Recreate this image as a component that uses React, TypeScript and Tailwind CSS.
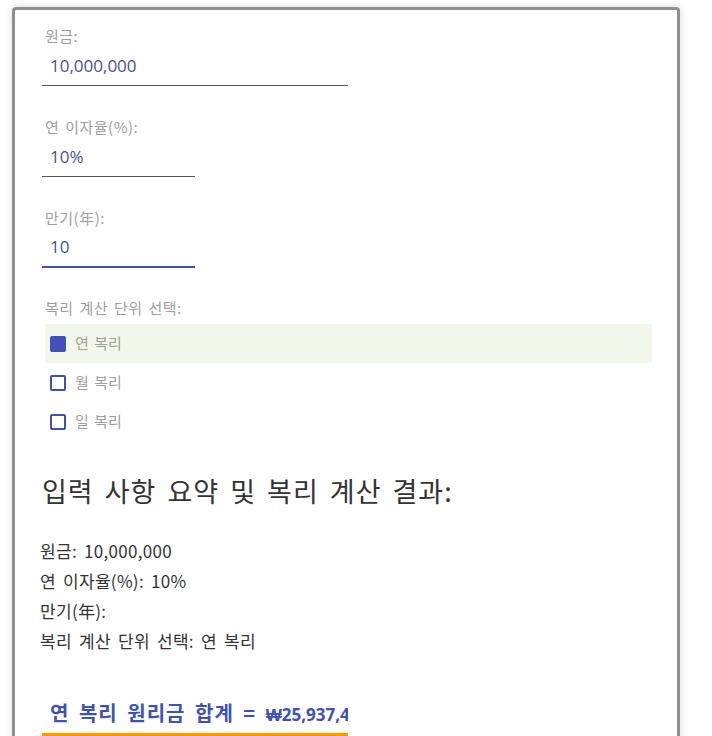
import React from 'react';

const font = { fontFamily: '"Noto Sans CJK KR", sans-serif' };

function Field({ label, value, width, focused }: { label: string; value: string; width: string; focused?: boolean }) {
  return (
    <div className="flex flex-col">
      <label className="pl-[3px] text-[15px] leading-[20px] tracking-[0.5px] [word-spacing:2px] text-[#9e9e9e]">
        {label}
      </label>
      <div
        className={`${width} h-[40px] flex items-center pl-[8px] text-[17px] text-[#4b4f94] ${
          focused ? 'border-b-2 border-[#3f51b5]' : 'border-b border-[#555555]'
        }`}
        style={{ fontFamily: '"Open Sans", sans-serif' }}
      >
        {value}
      </div>
    </div>
  );
}

function Option({ label, checked }: { label: string; checked?: boolean }) {
  return (
    <div className={`flex items-center h-[39px] pl-[5px] ${checked ? 'bg-[#f1f8e9]' : ''}`}>
      <span
        className={`w-[16px] h-[16px] rounded-[2px] border-2 border-[#3f51b5] ${checked ? 'bg-[#3f51b5]' : 'bg-white'}`}
      />
      <span className="ml-[9px] text-[15px] [word-spacing:2px] text-[#9e9e9e]">{label}</span>
    </div>
  );
}

export default function App() {
  return (
    <div className="bg-white min-h-[736px] h-[736px] overflow-hidden pl-[12px] pr-[32px] pt-[7px]" style={font}>
      <div className="border-[3px] border-[#8e8e8e] rounded-[4px] shadow-[0_0_8px_rgba(0,0,0,0.15)] pl-[27px] pr-[25px] pt-[16px] pb-10 h-[800px]">
        <div className="flex flex-col gap-[31px]">
          <Field label="원금:" value="10,000,000" width="w-[306px]" />
          <Field label="연 이자율(%):" value="10%" width="w-[153px]" />
          <Field label="만기(年):" value="10" width="w-[153px]" focused />
        </div>

        <div className="mt-[30px]">
          <div className="pl-[3px] text-[15px] leading-[20px] tracking-[0.5px] [word-spacing:2px] text-[#9e9e9e]">
            복리 계산 단위 선택:
          </div>
          <div className="mt-[6px] ml-[3px] flex flex-col">
            <Option label="연 복리" checked />
            <Option label="월 복리" />
            <Option label="일 복리" />
          </div>
        </div>

        <h2 className="mt-[34px] text-[27px] leading-[32px] tracking-[1px] [word-spacing:4px] text-[#333333]">
          입력 사항 요약 및 복리 계산 결과:
        </h2>

        <div className="mt-[29px] -ml-[2px] flex flex-col text-[17px] leading-[30px] tracking-[0.3px] [word-spacing:3px] text-[#333333]">
          <div>원금: 10,000,000</div>
          <div>연 이자율(%): 10%</div>
          <div>만기(年):</div>
          <div>복리 계산 단위 선택: 연 복리</div>
        </div>

        <div className="mt-[45px] w-[306px] overflow-hidden whitespace-nowrap border-b-[5px] border-[#ff9800] pl-[8px] pb-[6px] text-[20px] leading-[24px] font-bold tracking-[1px] [word-spacing:4px] text-[#3f51b5]">
          연 복리 원리금 합계 ={' '}
          <span className="tracking-normal text-[17px]" style={{ fontFamily: '"Open Sans", sans-serif' }}>
            ₩25,937,424.6
          </span>
        </div>
      </div>
    </div>
  );
}
